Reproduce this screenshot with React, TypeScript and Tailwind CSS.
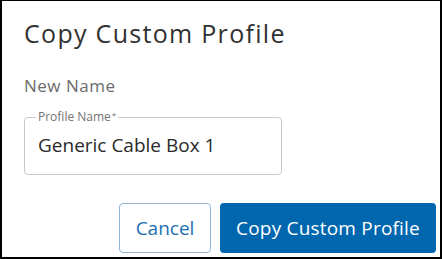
import React from 'react';

export default function App() {
  return <div className="w-[442px] h-[259px] bg-white border-t border-l-2 border-r-2 border-b-2 border-black overflow-hidden" style={{ fontFamily: '"Open Sans", sans-serif' }}>
      <div className="pl-[22px] pr-[4px] pt-[17px]">
        <h1 className="text-[25px] leading-[30px] text-[#313131] tracking-[1.3px]">Copy Custom Profile</h1>
        <div className="mt-[28px] text-[17px] leading-[20px] text-[#6b6b6b] tracking-[0.5px]">New Name</div>
        <fieldset className="mt-[15px] w-[258px] h-[64px] border border-[#c8c8c8] rounded-[4px] pl-[13px] pr-3 pb-0">
          <legend className="-ml-[2px] px-[2px] text-[12px] leading-[12px] text-[#737373]">
            Profile Name<span className="relative -top-[3px] text-[8px] ml-[1px]">*</span>
          </legend>
          <div className="mt-[10px] text-[19px] leading-[22px] text-[#2a2a2a]">Generic Cable Box 1</div>
        </fieldset>
        <div className="mt-[28px] flex justify-end gap-[9px]">
          <button className="w-[92px] h-[50px] border border-[#8fb6da] rounded-[4px] text-[19px] text-[#1d6fb3] bg-white">Cancel</button>
          <button className="w-[216px] h-[50px] rounded-[4px] text-[19px] text-white bg-[#0066ae] tracking-[0.2px]">Copy Custom Profile</button>
        </div>
      </div>
    </div>;
}
